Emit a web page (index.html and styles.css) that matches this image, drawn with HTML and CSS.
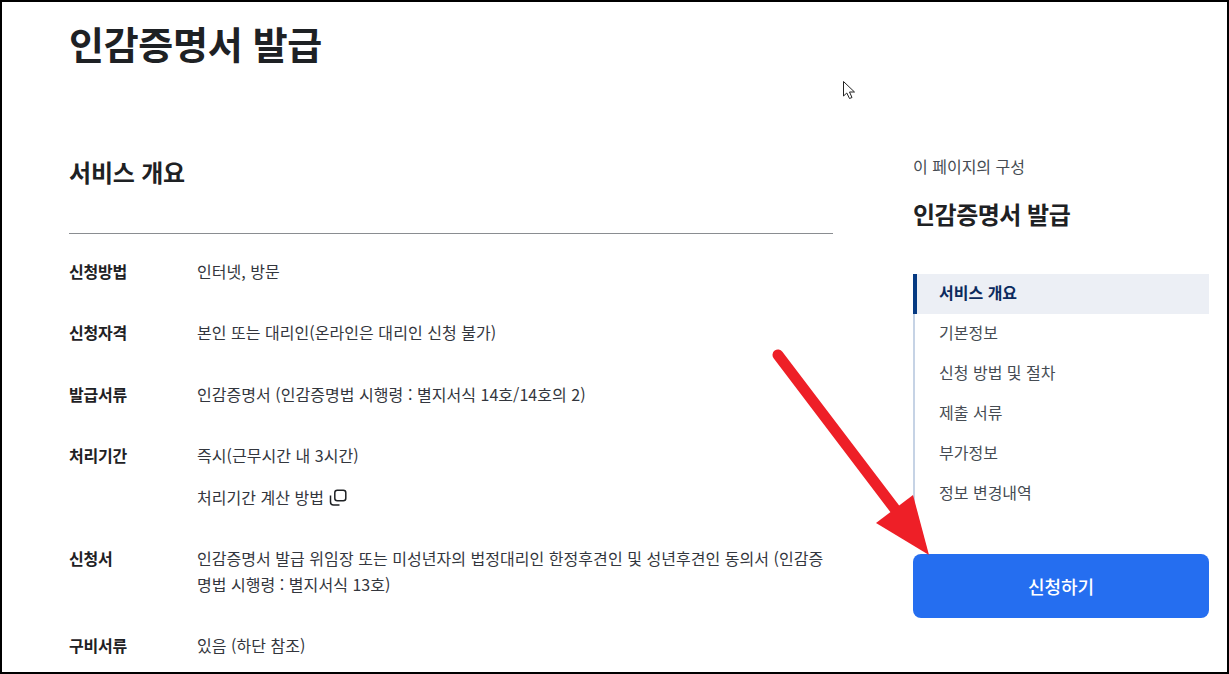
FILE: index.html
```html
<!DOCTYPE html>
<html lang="ko">
<head>
<meta charset="utf-8">
<title>인감증명서 발급</title>
<link rel="stylesheet" href="styles.css">
</head>
<body>
<div class="frame">
  <h1 class="title">인감증명서 발급</h1>
  <div class="columns">
    <main class="main">
      <h2 class="section-title">서비스 개요</h2>
      <dl class="info">
        <div class="row"><dt>신청방법</dt><dd>인터넷, 방문</dd></div>
        <div class="row"><dt>신청자격</dt><dd>본인 또는 대리인(온라인은 대리인 신청 불가)</dd></div>
        <div class="row"><dt>발급서류</dt><dd>인감증명서 (인감증명법 시행령 : 별지서식 14호/14호의 2)</dd></div>
        <div class="row"><dt>처리기간</dt><dd>즉시(근무시간 내 3시간)
          <span class="calc">처리기간 계산 방법
            <svg class="copy" width="18" height="17" viewBox="0 0 18 17" fill="none" stroke="#1e2124" stroke-width="1.5"><rect x="5.8" y="1.3" width="11" height="10.5" rx="2.5"/><path d="M1.5 6.5v6.5a3 3 0 0 0 3 3h6"/></svg>
          </span></dd></div>
        <div class="row"><dt>신청서</dt><dd>인감증명서 발급 위임장 또는 미성년자의 법정대리인 한정후견인 및 성년후견인 동의서 (인감증명법 시행령 : 별지서식 13호)</dd></div>
        <div class="row"><dt>구비서류</dt><dd>있음 (하단 참조)</dd></div>
      </dl>
    </main>
    <aside class="side">
      <p class="side-label">이 페이지의 구성</p>
      <h2 class="side-title">인감증명서 발급</h2>
      <ul class="toc">
        <li class="active">서비스 개요</li>
        <li>기본정보</li>
        <li>신청 방법 및 절차</li>
        <li>제출 서류</li>
        <li>부가정보</li>
        <li>정보 변경내역</li>
      </ul>
      <button class="apply" type="button">신청하기</button>
    </aside>
  </div>
  <svg class="arrow" width="170" height="215" viewBox="0 0 170 215"><path d="M8 7 L128 165" stroke="#ee1f27" stroke-width="11" stroke-linecap="round" fill="none"/><polygon points="143,147 106,175 159,207" fill="#ee1f27"/></svg>
  <svg class="cursor" width="14" height="21" viewBox="0 0 14 21"><path d="M1.5 1.5 V16 L4.8 13 L7.5 18.5 L10 17.5 L7.5 12 H12.5 Z" fill="#fff" stroke="#222" stroke-width="1"/></svg>
</div>
</body>
</html>
```
FILE: styles.css
```css
* { box-sizing: border-box; }
html, body { margin: 0; height: 100%; }
body { font-family: "Noto Sans CJK KR", "Noto Sans", sans-serif; color: #1e2124; background: #fff; }
.frame { position: relative; width: 1229px; height: 674px; border: 2px solid #000; overflow: hidden; padding: 0 18px 0 67px; }
.title { margin: 13px 0 0; font-size: 38px; line-height: 56px; font-weight: 700; letter-spacing: -0.3px; }
.columns { display: flex; gap: 80px; margin-top: 84px; }
.main { width: 764px; flex: none; }
.section-title { margin: 0; height: 79px; font-size: 24px; line-height: 34px; font-weight: 700; letter-spacing: -0.2px; border-bottom: 1px solid #8a8d91; }
.info { margin: 24px 0 0; }
.row { display: flex; margin-bottom: 35px; font-size: 16px; line-height: 26px; }
.row:nth-child(2) { margin-bottom: 36px; }
.row dt { width: 128px; flex: none; font-weight: 700; letter-spacing: -0.2px; }
.row dd { margin: 0; flex: 1; color: #33363d; letter-spacing: 0.04px; }
.calc { display: flex; align-items: center; gap: 5px; margin-top: 16px; }
.side { width: 296px; flex: none; }
.side-label { margin: -1px 0 0; font-size: 16px; line-height: 24px; color: #464c53; }
.side-title { margin: 20px 0 0; font-size: 24px; line-height: 32px; font-weight: 700; letter-spacing: -0.5px; }
.toc { list-style: none; margin: 44px 0 0; padding: 0; border-left: 2px solid #c6d3e5; }
.toc li { height: 40px; line-height: 36px; padding-left: 24px; font-size: 16px; color: #464c53; }
.toc li.active { margin-left: -2px; border-left: 4px solid #063a82; padding-left: 22px; background: #eceff5; color: #0b2a5e; font-weight: 700; }
.apply { display: block; width: 100%; height: 64px; margin-top: 40px; border: 0; border-radius: 8px; background: #256ef0; color: #fff; font: 500 18px "Noto Sans CJK KR", sans-serif; }
.arrow { position: absolute; left: 768px; top: 346px; }
.cursor { position: absolute; left: 840px; top: 78px; }
```
